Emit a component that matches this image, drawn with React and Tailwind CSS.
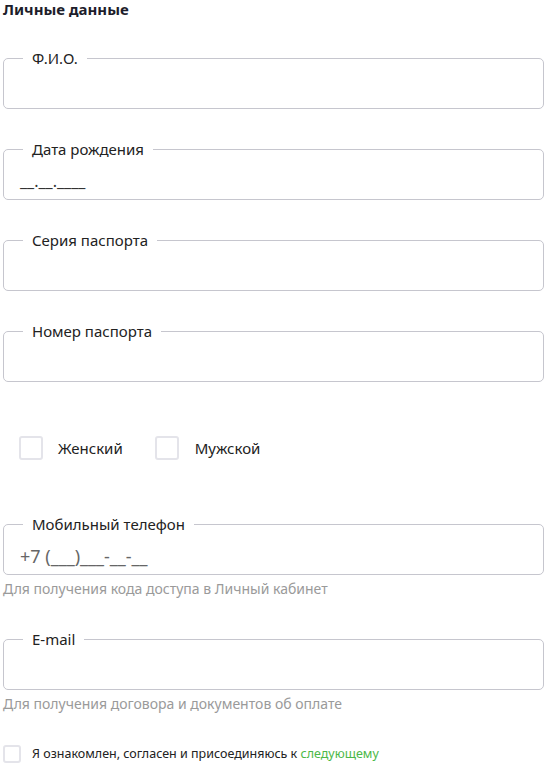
import { useState } from 'react';

function Field({ label, placeholder, className = '', placeholderClass = 'text-[16px] text-[#333]' }) {
  return (
    <fieldset className={`w-[541px] rounded-[5px] border border-[#c6c6ce] px-[16px] ${className}`}>
      <legend className="ml-[3px] px-[9px] text-[15px] leading-[20px] text-[#222]">{label}</legend>
      <div className={`pt-[12px] pb-[8px] leading-[20px] ${placeholderClass}`}>
        {placeholder || '\u00a0'}
      </div>
    </fieldset>
  );
}

function Box({ size = 'w-[24px] h-[24px]' }) {
  return <span className={`inline-block ${size} rounded-[3px] border-2 border-[#e4e4ea] bg-white`} />;
}

function App() {
  const [gender, setGender] = useState('');

  return (
    <main className="min-h-[772px] bg-white pl-[3px] font-['Noto_Sans','Open_Sans',sans-serif] text-[#222]">
      <h1 className="text-[15px] font-bold leading-[18px] text-[#1d1d2b]">Личные данные</h1>

      <Field label="Ф.И.О." className="mt-[30px]" />
      <Field label="Дата рождения" placeholder="__.__.____" className="mt-[30px]" />
      <Field label="Серия паспорта" className="mt-[30px]" />
      <Field label="Номер паспорта" className="mt-[30px]" />

      <div className="mt-[54px] flex items-center pl-[16px]">
        <label className="flex items-center gap-[15px]" onClick={() => setGender('f')}>
          <Box />
          <span className="text-[15px] leading-[20px] text-[#222]">Женский</span>
        </label>
        <label className="ml-[32px] flex items-center gap-[16px]" onClick={() => setGender('m')}>
          <Box />
          <span className="text-[15px] leading-[20px] text-[#222]">Мужской</span>
        </label>
        <input type="hidden" value={gender} />
      </div>

      <Field
        label="Мобильный телефон"
        placeholder="+7 (___)___-__-__"
        placeholderClass="text-[18px] text-[#666]"
        className="mt-[54px]"
      />
      <p className="mt-[4px] text-[14px] leading-[20px] text-[#9a9a9a]">Для получения кода доступа в Личный кабинет</p>

      <Field label="E-mail" className="mt-[30px]" />
      <p className="mt-[4px] text-[14px] leading-[20px] text-[#9a9a9a]">Для получения договора и документов об оплате</p>

      <label className="mt-[31px] flex items-center gap-[11px]">
        <Box size="w-[18px] h-[18px]" />
        <span className="text-[12.5px] leading-[18px] text-[#222]">
          Я ознакомлен, согласен и присоединяюсь к <span className="text-[#4cb848]">следующему</span>
        </span>
      </label>
    </main>
  );
}

export default App;
